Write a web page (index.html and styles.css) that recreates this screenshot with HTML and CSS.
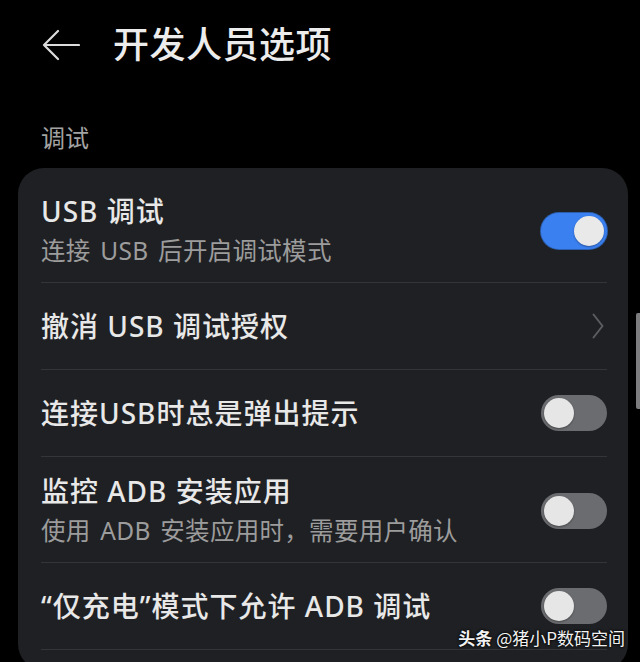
FILE: index.html
```html
<!DOCTYPE html>
<html lang="zh-CN">
<head>
    <meta charset="UTF-8">
    <meta name="viewport" content="width=device-width, initial-scale=1.0">
    <title>开发人员选项</title>
    <link rel="stylesheet" href="styles.css">
</head>
<body>
    <header class="top-bar">
        <svg class="back-icon" width="38" height="32" viewBox="0 0 38 32">
            <path d="M2 16 H37 M16 2 L2 16 L16 30" fill="none" stroke="#dcdcdc" stroke-width="2.2" stroke-linecap="round" stroke-linejoin="round"/>
        </svg>
        <h1>开发人员选项</h1>
    </header>

    <div class="section-label">调试</div>

    <div class="card">
        <div class="row two-line">
            <div class="row-text">
                <div class="row-title">USB 调试</div>
                <div class="row-sub">连接 USB 后开启调试模式</div>
            </div>
            <div class="switch on"><span class="knob"></span></div>
        </div>
        <div class="row">
            <div class="row-text">
                <div class="row-title">撤消 USB 调试授权</div>
            </div>
            <svg class="chevron" width="12" height="26" viewBox="0 0 12 26">
                <path d="M1.5 1.5 L10.5 13 L1.5 24.5" fill="none" stroke="#5b5c5f" stroke-width="2" stroke-linecap="round" stroke-linejoin="round"/>
            </svg>
        </div>
        <div class="row">
            <div class="row-text">
                <div class="row-title">连接USB时总是弹出提示</div>
            </div>
            <div class="switch"><span class="knob"></span></div>
        </div>
        <div class="row two-line">
            <div class="row-text">
                <div class="row-title">监控 ADB 安装应用</div>
                <div class="row-sub">使用 ADB 安装应用时，需要用户确认</div>
            </div>
            <div class="switch"><span class="knob"></span></div>
        </div>
        <div class="row">
            <div class="row-text">
                <div class="row-title">“仅充电”模式下允许 ADB 调试</div>
            </div>
            <div class="switch"><span class="knob"></span></div>
        </div>
    </div>

    <div class="scroll-indicator"></div>
    <div class="watermark"><b>头条</b> @猪小P数码空间</div>
</body>
</html>
```

FILE: styles.css
```css
html {
    overflow: hidden;
}
body {
    margin: 0;
    padding: 0;
    background: #000;
    color: #e8e8e8;
    font-family: "Noto Sans", "Noto Sans CJK SC", sans-serif;
    position: relative;
    height: 662px;
}
.top-bar {
    display: flex;
    align-items: center;
    padding: 23px 0 0 42px;
}
.back-icon {
    display: block;
    margin-right: 33px;
}
h1 {
    margin: 0;
    font-size: 36px;
    line-height: 44px;
    font-weight: 500;
    color: #ececec;
    letter-spacing: 0.5px;
}
.section-label {
    margin: 55px 0 0 41px;
    font-size: 24px;
    line-height: 32px;
    color: #a3a3a3;
}
.card {
    margin: 14px 12px 0 18px;
    background: #1f2023;
    border-radius: 26px;
    padding: 9px 21px 20px 23px;
}
.row {
    display: flex;
    align-items: center;
    justify-content: space-between;
    padding: 25px 0;
    border-bottom: 1px solid #343538;
}
.row.two-line {
    padding: 16px 0 13px;
}
.row-title {
    font-size: 28px;
    line-height: 36px;
    font-weight: 500;
    letter-spacing: 1px;
}
.row-sub {
    margin-top: 4px;
    font-size: 24.5px;
    line-height: 36px;
    color: #9c9c9c;
    word-spacing: 3px;
    letter-spacing: 0.3px;
}
.switch {
    flex: none;
    width: 66px;
    height: 36px;
    border-radius: 18px;
    background: #6b6c6f;
    position: relative;
}
.switch .knob {
    position: absolute;
    left: 3px;
    top: 3px;
    width: 30px;
    height: 30px;
    border-radius: 50%;
    background: #e6e6e6;
    box-shadow: 0 1px 2px rgba(0, 0, 0, 0.35);
}
.switch.on {
    background: #3b80f1;
    box-shadow: 0 0 0 1px #2b5fae;
}
.switch.on .knob {
    left: auto;
    right: 3px;
    background: #e9e9ea;
}
.chevron {
    display: block;
    margin-right: 3px;
}
.scroll-indicator {
    position: absolute;
    right: 0;
    top: 313px;
    width: 4px;
    height: 96px;
    background: #7c7c7e;
    border-radius: 2px 0 0 2px;
}
.watermark {
    position: absolute;
    right: 15px;
    top: 626px;
    font-family: "Noto Sans CJK SC", sans-serif;
    font-size: 17px;
    line-height: 24px;
    color: #f2f2f2;
    text-shadow: 0 0 2px #000, 0 0 3px #000;
}
.watermark b {
    font-weight: 700;
}
```
